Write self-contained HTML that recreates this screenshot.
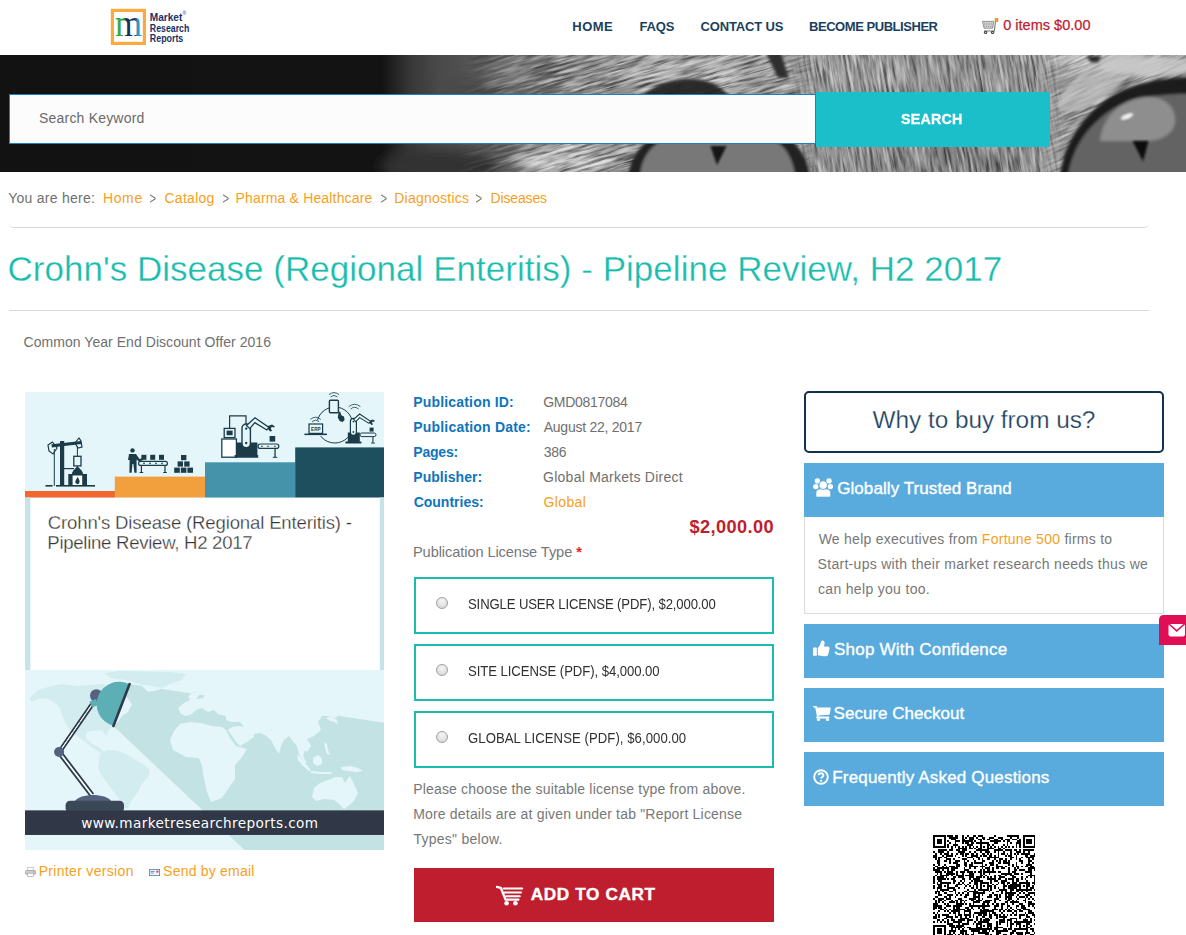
<!DOCTYPE html>
<html lang="en">
<head>
<meta charset="utf-8">
<title>Crohn's Disease (Regional Enteritis) - Pipeline Review, H2 2017</title>
<style>
*{box-sizing:border-box;margin:0;padding:0}
html,body{width:1186px;height:935px;overflow:hidden;background:#fff}
body{font-family:"Liberation Sans",sans-serif;color:#666;font-size:14px;position:relative}
.abs{position:absolute;white-space:nowrap;line-height:1}
.opt{position:absolute;left:414px;width:360px;height:56.5px;border:2px solid #1abcb0;background:#fff}
.opt i{position:absolute;left:20px;top:17.5px;width:12px;height:12px;border-radius:50%;border:1px solid #a0a0a0;background:radial-gradient(circle at 50% 30%,#f6f6f6,#d2d2d2)}
.pan{position:absolute;left:804px;width:360px;background:#5aabdd}
.hr{position:absolute;left:9px;width:1139px;height:1px;background:#dedede}
</style>
</head>
<body>
<svg class="abs" style="left:0;top:55px" width="1186" height="117" viewBox="0 55 1186 117">
<defs>
<linearGradient id="tone" x1="0" x2="1186" y1="0" y2="0" gradientUnits="userSpaceOnUse">
<stop offset="0" stop-color="#121212"/><stop offset="0.322" stop-color="#131313"/><stop offset="0.345" stop-color="#363636"/><stop offset="0.37" stop-color="#4a4a4a"/><stop offset="0.42" stop-color="#5a5a5a"/><stop offset="0.46" stop-color="#787878"/><stop offset="0.50" stop-color="#8c8c8c"/><stop offset="0.60" stop-color="#a0a0a0"/><stop offset="0.75" stop-color="#929292"/><stop offset="0.88" stop-color="#9a9a9a"/><stop offset="1" stop-color="#8c8c8c"/>
</linearGradient>
<filter id="furD" x="0" y="0" width="100%" height="100%" color-interpolation-filters="sRGB">
<feTurbulence type="fractalNoise" baseFrequency="0.035 0.4" numOctaves="3" seed="7" result="n"/>
<feColorMatrix in="n" type="matrix" values="0 0 0 0 0  0 0 0 0 0  0 0 0 0 0  2.6 0 0 0 -1.0"/>
<feGaussianBlur stdDeviation=".5"/>
</filter>
<filter id="furL" x="0" y="0" width="100%" height="100%" color-interpolation-filters="sRGB">
<feTurbulence type="fractalNoise" baseFrequency="0.035 0.4" numOctaves="3" seed="23" result="n"/>
<feColorMatrix in="n" type="matrix" values="0 0 0 0 1  0 0 0 0 1  0 0 0 0 1  2.6 0 0 0 -1.0"/>
<feGaussianBlur stdDeviation=".5"/>
</filter>
<filter id="b6"><feGaussianBlur stdDeviation="6"/></filter>
<filter id="b2"><feGaussianBlur stdDeviation="1.8"/></filter>
<filter id="b1"><feGaussianBlur stdDeviation=".9"/></filter>
<clipPath id="bc"><rect x="0" y="55" width="1186" height="117"/></clipPath>
<linearGradient id="gA" x1="0" x2="1186" y1="0" y2="0" gradientUnits="userSpaceOnUse"><stop offset=".385" stop-color="#fff" stop-opacity="0"/><stop offset=".47" stop-color="#fff" stop-opacity="1"/><stop offset=".665" stop-color="#fff" stop-opacity="1"/><stop offset=".69" stop-color="#fff" stop-opacity="0"/></linearGradient>
<mask id="mA"><rect x="0" y="55" width="1186" height="117" fill="url(#gA)"/></mask>
<linearGradient id="gB" x1="0" x2="1186" y1="0" y2="0" gradientUnits="userSpaceOnUse"><stop offset=".665" stop-color="#fff" stop-opacity="0"/><stop offset=".69" stop-color="#fff" stop-opacity="1"/><stop offset=".875" stop-color="#fff" stop-opacity="1"/><stop offset=".9" stop-color="#fff" stop-opacity="0"/></linearGradient>
<mask id="mB"><rect x="0" y="55" width="1186" height="117" fill="url(#gB)"/></mask>
<linearGradient id="gC" x1="0" x2="1186" y1="0" y2="0" gradientUnits="userSpaceOnUse"><stop offset=".875" stop-color="#fff" stop-opacity="0"/><stop offset=".9" stop-color="#fff" stop-opacity="1"/></linearGradient>
<mask id="mC"><rect x="0" y="55" width="1186" height="117" fill="url(#gC)"/></mask>
</defs>
<g clip-path="url(#bc)">
<rect x="0" y="55" width="1186" height="117" fill="url(#tone)"/>
<g filter="url(#b6)">
<ellipse cx="440" cy="166" rx="60" ry="16" fill="#303030"/>
<ellipse cx="470" cy="90" rx="30" ry="14" fill="#4a4a4a"/>
<ellipse cx="520" cy="75" rx="40" ry="14" fill="#727272"/>
<ellipse cx="565" cy="160" rx="50" ry="14" fill="#cfcfcf"/>
<ellipse cx="700" cy="68" rx="90" ry="12" fill="#b8b8b8"/>
<ellipse cx="880" cy="70" rx="60" ry="16" fill="#a4a4a4"/>
<ellipse cx="950" cy="160" rx="70" ry="14" fill="#808080"/>
<ellipse cx="1120" cy="62" rx="80" ry="14" fill="#c2c2c2"/>
</g>
<g mask="url(#mA)">
<rect x="330" y="-60" width="560" height="340" filter="url(#furD)" transform="rotate(-16 600 110)" opacity=".6"/>
<rect x="330" y="-60" width="560" height="340" filter="url(#furL)" transform="rotate(-16 600 110)" opacity=".55"/>
</g>
<g mask="url(#mB)">
<rect x="760" y="-40" width="320" height="320" filter="url(#furD)" transform="rotate(80 915 113)" opacity=".55"/>
<rect x="760" y="-40" width="320" height="320" filter="url(#furL)" transform="rotate(80 915 113)" opacity=".45"/>
</g>
<g mask="url(#mC)">
<rect x="1000" y="0" width="260" height="230" filter="url(#furD)" transform="rotate(-24 1100 100)" opacity=".45"/>
<rect x="1000" y="0" width="260" height="230" filter="url(#furL)" transform="rotate(-24 1100 100)" opacity=".5"/>
</g>
<!-- left eye -->
<g filter="url(#b2)">
<path d="M628 176 C632 150 650 130 690 126 L760 128 C790 132 806 150 810 176 Z" fill="#232323"/>
<path d="M640 176 C642 150 660 134 695 132 L755 134 C780 138 792 152 795 176 Z" fill="#787878"/>
<path d="M640 98 C654 85 672 79 690 79 C708 79 722 86 731 98 Z" fill="#1c1c1c" opacity=".9"/>
<path d="M766 53 L781 53 L789 78 L778 78 Z" fill="#2e2e2e"/>
</g>
<path d="M710.500 146 L726.500 146 L717 165 Z" fill="#121212" filter="url(#b1)"/>
<!-- right eye -->
<g filter="url(#b2)">
<ellipse cx="1100" cy="80" rx="50" ry="16" fill="#c0c0c0" transform="rotate(-35 1100 80)" opacity=".7"/>
<ellipse cx="1150" cy="66" rx="50" ry="9" fill="#c8c8c8" opacity=".8"/>
<path d="M1060 176 C1064 140 1086 112 1112 96 C1136 83 1160 78 1190 77 L1190 176 Z" fill="#1b1b1b"/>
<path d="M1068 176 C1072 146 1092 120 1118 106 C1140 96 1164 94 1190 94 L1190 176 Z" fill="#636363"/>
<path d="M1100 141 C1102 118 1120 99 1146 97 C1166 96 1176 108 1175 122 C1174 134 1160 141 1146 141 Z" fill="#8e8e8e"/>
<path d="M1087 56 L1102 56 L1098 63 L1090 62 Z" fill="#2c2c2c"/>
</g>
<ellipse cx="1127" cy="116.500" rx="6.500" ry="2.600" fill="#f2f2f2" transform="rotate(-22 1127 116.500)" filter="url(#b1)"/>
<path d="M1132.500 141 L1148.500 141 L1143 161.500 Z" fill="#0e0e0e" filter="url(#b1)"/>
</g>
</svg>

<div class="abs" style="left:9px;top:94px;width:807px;height:50px;background:#fcfcfc;border:1px solid #1c7fc4"></div>
<div class="abs" style="left:816px;top:92px;width:234px;height:55px;background:#1bbfc9"></div>
<div class="abs" style="left:9px;top:219px;width:1140px;height:8.5px;border-bottom:1px solid #d9d9d9;border-radius:0 0 5px 5px"></div>
<div class="hr" style="top:310px;width:1140px;background:#d9d9d9"></div>
<svg class="abs" style="left:25px;top:392px" width="359" height="458" viewBox="25 392 359 458">
<defs>
<clipPath id="beamclip"><path d="M129.6 682.800 L384 721.600 L384 850 L244.500 850 L113.400 726 Z"/></clipPath><path id="beamp" d="M129.6 684 L384 722.8 L384 850 L244.5 850 L113.4 726 Z"/>
<path id="land" d="
M29 698.5 L39 689.5 L52 686 L62 684 L78 686 L92 685 L103 684 L110 688 L118 690 L126 696 L132 704 L128 712 L122 716 L118 722 L112 727 L108 731 L107 736 L104 733 L102 730 L92 731 L86 733 L86 738 L92 744 L100 748 L104 752 L101 753 L93 748 L84 741 L76 735 L69 729 L65 722 L62 715 L60 708 L54 702 L46 698 L38 699 L32 702 Z
M104 673 L120 671 L147 671.5 L170 672 L186 674 L182 680 L170 684 L158 690 L148 692 L140 684 L126 680 L110 678 Z
M100 753 L108 750 L117 750.5 L126 754 L134 759 L143 764 L150 770 L148 777 L141 785 L138 792 L132 800 L128 808 L124 808 L120 800 L114 792 L108 784 L101 775 L98 768 L99 760 Z
M181 714 L178 708 L184 703 L190 700 L188 696 L194 692 L200 694 L196 699 L203 698 L206 692 L212 688 L220 690 L226 685 L238 682 L252 680 L270 678 L290 679 L310 682 L328 686 L345 690 L360 694 L372 698 L376 704 L368 706 L360 710 L352 708 L346 714 L340 712 L336 718 L330 716 L322 716 L318 722 L321 730 L314 736 L307 739 L311 746 L307 752 L305 750 L303 756 L307 763 L304 762 L299 754 L297 746 L292 740 L289 736 L284 740 L281 746 L279 754 L275 748 L271 740 L265 735 L260 733 L254 734 L254 737 L247 742 L240 746 L236 742 L232 736 L228 730 L232 727 L238 726 L244 727 L240 722 L232 722 L226 720 L226 716 L218 714 L214 710 L208 712 L202 708 L196 710 L192 714 L186 716 Z
M180 724 L190 722 L201 723 L212 726 L222 727 L226 730 L230 738 L236 746 L247 749 L242 757 L235 765 L235 779 L228 789 L222 798 L211 802 L207 792 L204 779 L202 766 L199 758 L186 757 L173 750 L170 740 L174 731 Z
M314 788 L320 783 L328 780 L336 777 L342 777 L345 783 L348 778 L350 776 L354 784 L358 793 L354 801 L348 806 L344 809 L338 803 L334 800 L324 799 L316 801 L312 797 Z
M297 754 L301 758 L306 764 L311 770 L309 771 L303 766 L298 760 Z
M311 771 L322 772 L332 772 L331 774 L320 774 L311 773 Z
M313 758 L318 755 L322 758 L322 764 L317 766 L313 763 Z
M341 767 L350 766 L358 768 L363 771 L356 772 L348 771 L342 770 Z
M324 742 L327 744 L328 750 L330 755 L327 754 L325 748 Z
M326 718 L331 716 L337 720 L338 724 L334 722 L330 721 Z
"/>
</defs>
<rect x="25" y="392" width="359" height="458" fill="#fff"/>
<!-- top scene -->
<rect x="25" y="392" width="359" height="106" fill="#e5f6fa"/>
<rect x="25" y="491" width="90" height="6.5" fill="#f2672f"/>
<rect x="114.8" y="476.6" width="90.4" height="20.9" fill="#f2a03d"/>
<rect x="205" y="462.3" width="90.4" height="35.2" fill="#4593ab"/>
<rect x="295.2" y="447.4" width="88.8" height="50.1" fill="#1d4f5e"/>
<g fill="#1b3b49" stroke="none">
<!-- pump jack / forge -->
<rect x="45.5" y="485" width="7" height="1.6"/><rect x="56" y="485" width="39" height="1.6"/>
<rect x="60" y="441" width="4.2" height="45"/>
<path d="M51.5 444.2 L81 441 L81.4 444 L51.8 447.6 Z"/>
<path d="M52.5 442 L48 445 L49 451 L53 454 L57 448 Z" fill="none" stroke="#1b3b49" stroke-width="1.2"/>
<path d="M79 438 L75 443 L78 448 L82 447 L81 441 Z" fill="none" stroke="#1b3b49" stroke-width="1.2"/>
<rect x="53.8" y="449" width="1" height="37"/><rect x="76.9" y="446" width="1" height="10"/>
<rect x="73.8" y="456.3" width="7.2" height="9.6" fill="#e5f6fa" stroke="#1b3b49" stroke-width="1.3"/>
<rect x="64" y="468" width="10" height="1.2"/>
<path d="M73 471 L77.4 466 L82 471 Z"/>
<path d="M68.3 486 L68.3 474 L72 474 C72 468 83 468 83 474 L87 474 L87 486 Z"/>
<rect x="72.6" y="475.5" width="9.6" height="9.5" fill="#fff"/>
<path d="M77.4 477 C79.5 479.5 80 481 79.3 483 C78.6 484.6 76.2 484.6 75.5 483 C74.9 481.3 76 480 77.4 477 Z"/>
<!-- person + conveyor -->
<circle cx="132.5" cy="450.4" r="2.2"/>
<path d="M129 454 L136 454 L139.5 459 L142.5 458 L143 460 L139 461.8 L136.6 459.5 L136.6 472.8 L134.4 472.8 L133.4 464 L132.4 464 L131.6 472.8 L129.4 472.8 L129.6 460 L128 460 Z"/>
<rect x="141.4" y="454.8" width="5" height="5"/><rect x="150.2" y="454.8" width="5" height="5"/><rect x="159" y="454.8" width="5" height="5"/>
<rect x="138.6" y="461.4" width="28.8" height="4" rx="2" fill="#e5f6fa" stroke="#1b3b49" stroke-width="1.2"/>
<circle cx="144" cy="463.4" r=".8"/><circle cx="150" cy="463.4" r=".8"/><circle cx="156" cy="463.4" r=".8"/><circle cx="162" cy="463.4" r=".8"/>
<rect x="140.8" y="466" width="1.2" height="6.6"/><rect x="164.4" y="466" width="1.2" height="6.6"/><rect x="139.6" y="472" width="3.6" height="1"/><rect x="163.2" y="472" width="3.6" height="1"/>
<!-- box pyramid -->
<rect x="181" y="455" width="5.4" height="5.2"/><rect x="177.6" y="461.4" width="5.4" height="5.2"/><rect x="184.2" y="461.4" width="5.4" height="5.2"/>
<rect x="174.2" y="467.6" width="5.6" height="5.2"/><rect x="180.8" y="467.6" width="5.6" height="5.2"/><rect x="187.4" y="467.6" width="5.6" height="5.2"/>
<!-- robot 1 -->
<rect x="221.8" y="439" width="14.6" height="18.2" fill="#fff" stroke="#1b3b49" stroke-width="1.3"/>
<rect x="224.2" y="428.4" width="10.8" height="9.2" fill="#e5f6fa" stroke="#1b3b49" stroke-width="1.3"/><rect x="226.6" y="430.6" width="6" height="4.6"/>
<path d="M229.6 428 L229.6 415.8 L246 415.8 L246 428" fill="none" stroke="#1b3b49" stroke-width="1.2"/>
<path d="M237 442.6 L257.4 442.6 L257.4 455 L258.2 455 L258.2 457.8 L234.6 457.8 L234.6 455 L237 455 Z"/>
<rect x="242" y="424" width="8.4" height="23.6" rx="4.2" fill="#e5f6fa" stroke="#1b3b49" stroke-width="1.4"/>
<circle cx="246.2" cy="428.6" r="1.2"/><circle cx="246.2" cy="443" r="1.2"/>
<path d="M246.5 425.5 L255 417.8 L269 427.4 L266.8 430 L254.8 422.6 L249.8 428.6 Z" fill="#e5f6fa" stroke="#1b3b49" stroke-width="1.3"/>
<path d="M268 426 L272 424.4 L275 426.4 L273.6 427.6 L271.8 426.8 L270.8 428.4 L272 431 L270 431.6 L268 429 Z"/>
<rect x="269.6" y="436" width="5.6" height="5.6"/>
<rect x="258" y="444" width="20.8" height="4.4" rx="2.2" fill="#e5f6fa" stroke="#1b3b49" stroke-width="1.2"/>
<circle cx="262" cy="446.2" r=".8"/><circle cx="268" cy="446.2" r=".8"/><circle cx="275" cy="446.2" r=".8"/>
<rect x="274.4" y="448.6" width="1.3" height="8.6"/><rect x="272.8" y="456.8" width="4.4" height="1"/>
<!-- connected cluster -->
<circle cx="334.8" cy="425" r="18" fill="none" stroke="#1b3b49" stroke-width="1"/>
<rect x="329.4" y="400.2" width="9" height="12.6" rx="1" fill="#e5f6fa" stroke="#1b3b49" stroke-width="1.4"/>
<path d="M330.6 396.8 Q334 394 337.4 396.8 M329 394.6 Q334 390.6 339 394.6" fill="none" stroke="#1b3b49" stroke-width=".8"/>
<path d="M338.6 412 L340 411.6 L341.6 415.6 L344 416.4 L344.6 420 L342.6 422 L339.6 421 L337.8 417.4 Z"/>
<rect x="302" y="420" width="28" height="16" fill="#e5f6fa" stroke="none"/>
<rect x="309" y="424" width="13.6" height="9.4" fill="#e5f6fa" stroke="#1b3b49" stroke-width="1.2"/>
<rect x="304.4" y="433.6" width="22.6" height="1.5"/>
<path d="M312 421.6 Q315.6 418.6 319.2 421.6 M310.4 419.4 Q315.6 415 320.8 419.4" fill="none" stroke="#1b3b49" stroke-width=".8"/>
<path d="M350.6 409 Q354.6 405.6 358.6 409 M348.8 406.6 Q354.6 402 360.4 406.6" fill="none" stroke="#1b3b49" stroke-width=".8"/>
<rect x="346" y="414" width="32" height="30" fill="#e5f6fa" stroke="none" opacity="0"/>
<path d="M347.8 432.4 L359.8 432.4 L359.8 441.4 L361.4 441.4 L361.4 443.4 L345.4 443.4 L345.4 441.4 L347.8 441.4 Z"/>
<rect x="350.4" y="418.4" width="6" height="17" rx="3" fill="#e5f6fa" stroke="#1b3b49" stroke-width="1.2"/>
<circle cx="353.4" cy="421.6" r=".9"/><circle cx="353.4" cy="432" r=".9"/>
<path d="M353.6 419.4 L359.6 414 L370.6 421.4 L369 423.4 L359.6 417.6 L355.8 421.8 Z" fill="#e5f6fa" stroke="#1b3b49" stroke-width="1.1"/>
<path d="M370 420.6 L373 419.6 L375 421 L373.6 422 L372.6 421.6 L372 422.8 L373 424.6 L371.4 425 L369.8 423 Z"/>
<rect x="369.6" y="427.6" width="4" height="4"/>
<rect x="360" y="433" width="16" height="3.6" rx="1.8" fill="#e5f6fa" stroke="#1b3b49" stroke-width="1"/>
<rect x="372.4" y="436.6" width="1.1" height="6.4"/><rect x="371" y="442.6" width="4" height=".9"/>
</g>
<text x="315.8" y="431.4" font-family="Liberation Sans, sans-serif" font-size="4.6" font-weight="bold" fill="#1b3b49" text-anchor="middle">ERP</text>
<!-- white text zone side borders -->
<rect x="25" y="497.5" width="5.4" height="173" fill="#c6e4e7"/>
<rect x="379.8" y="497.5" width="4.2" height="173" fill="#c6e4e7"/>
<!-- bottom scene -->
<rect x="25" y="670" width="359" height="180" fill="#e5f6fa"/>
<clipPath id="lclip"><rect x="25" y="670" width="178" height="180"/></clipPath><g clip-path="url(#lclip)"><use href="#land" fill="#d3ecef"/></g>
<use href="#beamp" fill="#c3e2e3"/>
<g clip-path="url(#beamclip)"><use href="#land" fill="#e5f6fa"/></g>
<rect x="25" y="810.6" width="359" height="24.2" fill="#303746"/>
<!-- lamp -->
<g>
<path d="M91 703.5 L58 751.5 M60.4 753 L93.4 705" stroke="#2f3a4a" stroke-width="1.8" fill="none"/>
<path d="M92.2 704.2 L59.2 752.2" stroke="#fff" stroke-width="1.0" fill="none" stroke-dasharray="9 2.5"/>
<path d="M57.6 753 L90.4 796 M60.6 751 L93.4 794" stroke="#2f3a4a" stroke-width="1.8" fill="none"/>
<path d="M59.1 752 L92 795" stroke="#fff" stroke-width="1.0" fill="none" stroke-dasharray="9 2.5"/>
<circle cx="59.1" cy="752" r="5" fill="#546280"/>
<circle cx="96.4" cy="695.6" r="6.4" fill="#546280"/>
<path d="M89.5 701.5 L96 699 L98 705 L92 707.5 Z" fill="#5cb0b5"/>
<path d="M129.4 684.3 A22.4 22.4 0 1 0 113.3 725.8 Z" fill="#5cb0b5"/>
<path d="M129.6 684 L113.4 726" stroke="#2f3a4a" stroke-width="2.6" stroke-linecap="round"/>
<path d="M74.8 801.4 C80 793 106 793 111.4 801.4 Z" fill="#546280"/>
<rect x="65.6" y="800.8" width="58.4" height="12" rx="4.5" fill="#3b4858"/>
</g>
<rect x="25" y="810.6" width="359" height="24.2" fill="#303746"/>
</svg>

<div class="opt" style="top:577px"><i></i></div>
<div class="opt" style="top:644px"><i></i></div>
<div class="opt" style="top:711px"><i></i></div>
<div class="abs" style="left:414px;top:867.6px;width:360px;height:54.8px;background:#be1e2d"></div>
<div class="abs" style="left:804px;top:391px;width:360px;height:61.5px;border:2px solid #12304f;border-radius:5px;background:#fff"></div>
<div class="pan" style="top:463px;height:54px"></div>
<div class="abs" style="left:804px;top:517px;width:360px;height:96.5px;border:1px solid #ddd;border-top:0;background:#fff"></div>
<div class="pan" style="top:624.4px;height:53.2px"></div>
<div class="pan" style="top:688.4px;height:53.2px"></div>
<div class="pan" style="top:752.4px;height:53.2px"></div>
<svg class="abs" style="left:932.7px;top:835px" width="102.4" height="102.4" viewBox="0 0 57 57" shape-rendering="crispEdges"><path d="M0 0h7v1h-7zM8 0h3v1h-3zM12 0h2v1h-2zM16 0h1v1h-1zM19 0h1v1h-1zM22 0h2v1h-2zM25 0h3v1h-3zM34 0h1v1h-1zM41 0h7v1h-7zM50 0h7v1h-7zM0 1h1v1h-1zM6 1h1v1h-1zM9 1h5v1h-5zM16 1h1v1h-1zM18 1h1v1h-1zM20 1h3v1h-3zM24 1h1v1h-1zM27 1h2v1h-2zM31 1h3v1h-3zM36 1h3v1h-3zM43 1h1v1h-1zM47 1h1v1h-1zM50 1h1v1h-1zM56 1h1v1h-1zM0 2h1v1h-1zM2 2h3v1h-3zM6 2h1v1h-1zM10 2h3v1h-3zM16 2h2v1h-2zM20 2h3v1h-3zM25 2h2v1h-2zM28 2h1v1h-1zM30 2h2v1h-2zM34 2h2v1h-2zM38 2h1v1h-1zM40 2h3v1h-3zM44 2h3v1h-3zM48 2h1v1h-1zM50 2h1v1h-1zM52 2h3v1h-3zM56 2h1v1h-1zM0 3h1v1h-1zM2 3h3v1h-3zM6 3h1v1h-1zM8 3h1v1h-1zM12 3h3v1h-3zM16 3h6v1h-6zM23 3h1v1h-1zM26 3h1v1h-1zM32 3h6v1h-6zM39 3h1v1h-1zM41 3h2v1h-2zM47 3h2v1h-2zM50 3h1v1h-1zM52 3h3v1h-3zM56 3h1v1h-1zM0 4h1v1h-1zM2 4h3v1h-3zM6 4h1v1h-1zM9 4h1v1h-1zM12 4h1v1h-1zM16 4h1v1h-1zM18 4h2v1h-2zM21 4h2v1h-2zM24 4h7v1h-7zM34 4h2v1h-2zM41 4h1v1h-1zM43 4h1v1h-1zM46 4h3v1h-3zM50 4h1v1h-1zM52 4h3v1h-3zM56 4h1v1h-1zM0 5h1v1h-1zM6 5h1v1h-1zM8 5h1v1h-1zM11 5h3v1h-3zM19 5h3v1h-3zM26 5h1v1h-1zM30 5h2v1h-2zM33 5h1v1h-1zM39 5h1v1h-1zM41 5h1v1h-1zM46 5h1v1h-1zM48 5h1v1h-1zM50 5h1v1h-1zM56 5h1v1h-1zM0 6h7v1h-7zM8 6h1v1h-1zM10 6h1v1h-1zM12 6h1v1h-1zM14 6h1v1h-1zM16 6h1v1h-1zM18 6h1v1h-1zM20 6h1v1h-1zM22 6h1v1h-1zM24 6h1v1h-1zM26 6h1v1h-1zM28 6h1v1h-1zM30 6h1v1h-1zM32 6h1v1h-1zM34 6h1v1h-1zM36 6h1v1h-1zM38 6h1v1h-1zM40 6h1v1h-1zM42 6h1v1h-1zM44 6h1v1h-1zM46 6h1v1h-1zM48 6h1v1h-1zM50 6h7v1h-7zM10 7h1v1h-1zM14 7h5v1h-5zM20 7h2v1h-2zM23 7h1v1h-1zM25 7h2v1h-2zM30 7h4v1h-4zM36 7h2v1h-2zM39 7h1v1h-1zM3 8h5v1h-5zM9 8h2v1h-2zM13 8h2v1h-2zM16 8h3v1h-3zM24 8h7v1h-7zM34 8h5v1h-5zM40 8h4v1h-4zM45 8h2v1h-2zM48 8h1v1h-1zM50 8h6v1h-6zM0 9h1v1h-1zM3 9h3v1h-3zM8 9h1v1h-1zM14 9h4v1h-4zM20 9h1v1h-1zM23 9h1v1h-1zM26 9h1v1h-1zM29 9h3v1h-3zM34 9h1v1h-1zM36 9h1v1h-1zM39 9h1v1h-1zM43 9h1v1h-1zM46 9h3v1h-3zM50 9h1v1h-1zM53 9h1v1h-1zM1 10h1v1h-1zM4 10h1v1h-1zM6 10h3v1h-3zM10 10h1v1h-1zM13 10h1v1h-1zM15 10h2v1h-2zM18 10h2v1h-2zM21 10h2v1h-2zM24 10h1v1h-1zM27 10h2v1h-2zM30 10h1v1h-1zM32 10h1v1h-1zM36 10h1v1h-1zM38 10h2v1h-2zM41 10h1v1h-1zM43 10h1v1h-1zM45 10h1v1h-1zM47 10h1v1h-1zM49 10h5v1h-5zM56 10h1v1h-1zM0 11h2v1h-2zM5 11h1v1h-1zM7 11h4v1h-4zM12 11h1v1h-1zM16 11h1v1h-1zM18 11h1v1h-1zM21 11h4v1h-4zM26 11h1v1h-1zM28 11h2v1h-2zM31 11h2v1h-2zM34 11h1v1h-1zM36 11h1v1h-1zM40 11h1v1h-1zM42 11h2v1h-2zM46 11h1v1h-1zM51 11h2v1h-2zM54 11h3v1h-3zM0 12h2v1h-2zM3 12h2v1h-2zM6 12h2v1h-2zM14 12h1v1h-1zM19 12h3v1h-3zM24 12h2v1h-2zM30 12h7v1h-7zM43 12h2v1h-2zM46 12h1v1h-1zM49 12h1v1h-1zM52 12h4v1h-4zM1 13h1v1h-1zM3 13h1v1h-1zM7 13h3v1h-3zM11 13h1v1h-1zM16 13h3v1h-3zM22 13h1v1h-1zM25 13h1v1h-1zM27 13h1v1h-1zM30 13h2v1h-2zM34 13h1v1h-1zM37 13h2v1h-2zM40 13h1v1h-1zM43 13h1v1h-1zM46 13h1v1h-1zM48 13h1v1h-1zM53 13h1v1h-1zM55 13h1v1h-1zM2 14h2v1h-2zM6 14h2v1h-2zM9 14h1v1h-1zM12 14h3v1h-3zM17 14h1v1h-1zM19 14h1v1h-1zM23 14h1v1h-1zM27 14h2v1h-2zM33 14h1v1h-1zM35 14h1v1h-1zM37 14h1v1h-1zM39 14h2v1h-2zM42 14h1v1h-1zM48 14h2v1h-2zM53 14h2v1h-2zM2 15h2v1h-2zM9 15h1v1h-1zM11 15h3v1h-3zM17 15h2v1h-2zM21 15h1v1h-1zM23 15h5v1h-5zM31 15h3v1h-3zM36 15h2v1h-2zM39 15h4v1h-4zM46 15h1v1h-1zM49 15h1v1h-1zM53 15h1v1h-1zM55 15h1v1h-1zM0 16h1v1h-1zM3 16h1v1h-1zM6 16h1v1h-1zM13 16h2v1h-2zM17 16h2v1h-2zM20 16h2v1h-2zM27 16h1v1h-1zM29 16h1v1h-1zM32 16h2v1h-2zM35 16h1v1h-1zM42 16h1v1h-1zM44 16h1v1h-1zM46 16h1v1h-1zM52 16h3v1h-3zM1 17h2v1h-2zM5 17h1v1h-1zM7 17h1v1h-1zM9 17h3v1h-3zM13 17h2v1h-2zM18 17h1v1h-1zM20 17h5v1h-5zM26 17h3v1h-3zM31 17h1v1h-1zM35 17h4v1h-4zM40 17h1v1h-1zM44 17h1v1h-1zM46 17h2v1h-2zM49 17h1v1h-1zM51 17h2v1h-2zM54 17h2v1h-2zM0 18h1v1h-1zM2 18h7v1h-7zM10 18h4v1h-4zM17 18h1v1h-1zM20 18h1v1h-1zM23 18h1v1h-1zM27 18h1v1h-1zM29 18h3v1h-3zM33 18h1v1h-1zM35 18h2v1h-2zM38 18h2v1h-2zM42 18h1v1h-1zM45 18h1v1h-1zM47 18h1v1h-1zM53 18h4v1h-4zM0 19h4v1h-4zM5 19h1v1h-1zM8 19h1v1h-1zM10 19h2v1h-2zM17 19h3v1h-3zM26 19h1v1h-1zM28 19h1v1h-1zM30 19h2v1h-2zM33 19h1v1h-1zM42 19h1v1h-1zM45 19h2v1h-2zM48 19h3v1h-3zM53 19h2v1h-2zM56 19h1v1h-1zM1 20h4v1h-4zM6 20h1v1h-1zM8 20h3v1h-3zM13 20h1v1h-1zM15 20h3v1h-3zM19 20h3v1h-3zM23 20h1v1h-1zM25 20h2v1h-2zM28 20h7v1h-7zM36 20h2v1h-2zM42 20h1v1h-1zM44 20h2v1h-2zM51 20h4v1h-4zM2 21h1v1h-1zM4 21h1v1h-1zM7 21h5v1h-5zM13 21h1v1h-1zM16 21h1v1h-1zM20 21h3v1h-3zM26 21h1v1h-1zM28 21h1v1h-1zM31 21h1v1h-1zM38 21h6v1h-6zM45 21h3v1h-3zM49 21h1v1h-1zM54 21h1v1h-1zM1 22h1v1h-1zM4 22h5v1h-5zM10 22h1v1h-1zM13 22h4v1h-4zM18 22h5v1h-5zM26 22h2v1h-2zM29 22h1v1h-1zM34 22h1v1h-1zM36 22h2v1h-2zM40 22h1v1h-1zM43 22h2v1h-2zM53 22h4v1h-4zM0 23h1v1h-1zM2 23h4v1h-4zM7 23h1v1h-1zM11 23h2v1h-2zM14 23h3v1h-3zM20 23h3v1h-3zM24 23h3v1h-3zM28 23h1v1h-1zM30 23h1v1h-1zM32 23h1v1h-1zM34 23h1v1h-1zM37 23h3v1h-3zM44 23h2v1h-2zM49 23h1v1h-1zM52 23h1v1h-1zM54 23h1v1h-1zM56 23h1v1h-1zM0 24h1v1h-1zM2 24h5v1h-5zM8 24h1v1h-1zM10 24h2v1h-2zM16 24h2v1h-2zM20 24h1v1h-1zM22 24h4v1h-4zM30 24h5v1h-5zM36 24h2v1h-2zM40 24h1v1h-1zM42 24h3v1h-3zM46 24h2v1h-2zM49 24h1v1h-1zM51 24h1v1h-1zM56 24h1v1h-1zM0 25h1v1h-1zM3 25h2v1h-2zM11 25h2v1h-2zM15 25h1v1h-1zM17 25h1v1h-1zM21 25h1v1h-1zM23 25h5v1h-5zM32 25h1v1h-1zM34 25h2v1h-2zM38 25h3v1h-3zM44 25h1v1h-1zM46 25h2v1h-2zM52 25h1v1h-1zM56 25h1v1h-1zM0 26h1v1h-1zM2 26h1v1h-1zM4 26h6v1h-6zM11 26h1v1h-1zM14 26h1v1h-1zM16 26h1v1h-1zM20 26h1v1h-1zM23 26h2v1h-2zM26 26h5v1h-5zM32 26h1v1h-1zM36 26h1v1h-1zM38 26h2v1h-2zM41 26h2v1h-2zM44 26h3v1h-3zM48 26h6v1h-6zM55 26h2v1h-2zM2 27h3v1h-3zM8 27h1v1h-1zM13 27h3v1h-3zM17 27h1v1h-1zM19 27h1v1h-1zM23 27h2v1h-2zM26 27h1v1h-1zM30 27h1v1h-1zM33 27h1v1h-1zM35 27h1v1h-1zM39 27h1v1h-1zM41 27h1v1h-1zM43 27h6v1h-6zM52 27h2v1h-2zM56 27h1v1h-1zM0 28h1v1h-1zM3 28h2v1h-2zM6 28h1v1h-1zM8 28h1v1h-1zM12 28h2v1h-2zM18 28h1v1h-1zM20 28h1v1h-1zM22 28h1v1h-1zM24 28h1v1h-1zM26 28h1v1h-1zM28 28h1v1h-1zM30 28h3v1h-3zM34 28h1v1h-1zM39 28h2v1h-2zM42 28h7v1h-7zM50 28h1v1h-1zM52 28h2v1h-2zM55 28h1v1h-1zM0 29h1v1h-1zM2 29h3v1h-3zM8 29h4v1h-4zM14 29h1v1h-1zM17 29h1v1h-1zM21 29h2v1h-2zM24 29h1v1h-1zM26 29h1v1h-1zM30 29h1v1h-1zM32 29h1v1h-1zM34 29h1v1h-1zM36 29h1v1h-1zM39 29h1v1h-1zM42 29h5v1h-5zM48 29h1v1h-1zM52 29h1v1h-1zM54 29h2v1h-2zM2 30h1v1h-1zM4 30h5v1h-5zM11 30h2v1h-2zM19 30h1v1h-1zM23 30h1v1h-1zM25 30h6v1h-6zM32 30h1v1h-1zM37 30h4v1h-4zM43 30h2v1h-2zM46 30h9v1h-9zM56 30h1v1h-1zM1 31h3v1h-3zM5 31h1v1h-1zM9 31h2v1h-2zM12 31h1v1h-1zM17 31h2v1h-2zM20 31h5v1h-5zM28 31h1v1h-1zM31 31h1v1h-1zM35 31h2v1h-2zM38 31h1v1h-1zM40 31h1v1h-1zM43 31h1v1h-1zM46 31h2v1h-2zM49 31h1v1h-1zM52 31h1v1h-1zM1 32h1v1h-1zM3 32h1v1h-1zM6 32h2v1h-2zM12 32h1v1h-1zM14 32h1v1h-1zM16 32h1v1h-1zM19 32h1v1h-1zM22 32h7v1h-7zM33 32h1v1h-1zM38 32h1v1h-1zM40 32h6v1h-6zM48 32h1v1h-1zM50 32h1v1h-1zM53 32h4v1h-4zM3 33h2v1h-2zM8 33h3v1h-3zM13 33h1v1h-1zM15 33h1v1h-1zM18 33h2v1h-2zM22 33h2v1h-2zM25 33h1v1h-1zM27 33h1v1h-1zM31 33h2v1h-2zM34 33h2v1h-2zM37 33h1v1h-1zM40 33h1v1h-1zM42 33h3v1h-3zM47 33h1v1h-1zM51 33h3v1h-3zM56 33h1v1h-1zM1 34h2v1h-2zM6 34h2v1h-2zM9 34h1v1h-1zM12 34h1v1h-1zM17 34h2v1h-2zM22 34h4v1h-4zM30 34h3v1h-3zM35 34h1v1h-1zM37 34h1v1h-1zM40 34h4v1h-4zM46 34h1v1h-1zM48 34h3v1h-3zM52 34h1v1h-1zM54 34h1v1h-1zM0 35h1v1h-1zM3 35h3v1h-3zM7 35h3v1h-3zM14 35h2v1h-2zM20 35h4v1h-4zM25 35h1v1h-1zM27 35h1v1h-1zM34 35h3v1h-3zM40 35h1v1h-1zM42 35h2v1h-2zM47 35h1v1h-1zM51 35h1v1h-1zM53 35h1v1h-1zM55 35h1v1h-1zM1 36h1v1h-1zM3 36h2v1h-2zM6 36h1v1h-1zM10 36h1v1h-1zM12 36h2v1h-2zM15 36h2v1h-2zM18 36h1v1h-1zM21 36h2v1h-2zM24 36h3v1h-3zM29 36h4v1h-4zM34 36h1v1h-1zM37 36h1v1h-1zM41 36h2v1h-2zM44 36h1v1h-1zM46 36h1v1h-1zM50 36h2v1h-2zM56 36h1v1h-1zM1 37h1v1h-1zM3 37h1v1h-1zM5 37h1v1h-1zM9 37h3v1h-3zM13 37h1v1h-1zM15 37h1v1h-1zM17 37h1v1h-1zM22 37h4v1h-4zM28 37h4v1h-4zM34 37h1v1h-1zM40 37h2v1h-2zM43 37h5v1h-5zM51 37h1v1h-1zM53 37h2v1h-2zM0 38h3v1h-3zM6 38h1v1h-1zM8 38h1v1h-1zM13 38h4v1h-4zM18 38h1v1h-1zM20 38h1v1h-1zM22 38h1v1h-1zM27 38h2v1h-2zM30 38h1v1h-1zM33 38h1v1h-1zM35 38h2v1h-2zM38 38h2v1h-2zM41 38h1v1h-1zM44 38h1v1h-1zM48 38h2v1h-2zM53 38h4v1h-4zM0 39h5v1h-5zM7 39h3v1h-3zM11 39h5v1h-5zM20 39h12v1h-12zM34 39h3v1h-3zM38 39h1v1h-1zM41 39h2v1h-2zM46 39h2v1h-2zM49 39h2v1h-2zM53 39h1v1h-1zM55 39h1v1h-1zM0 40h2v1h-2zM3 40h2v1h-2zM6 40h1v1h-1zM11 40h1v1h-1zM13 40h2v1h-2zM18 40h2v1h-2zM21 40h1v1h-1zM25 40h1v1h-1zM27 40h2v1h-2zM34 40h1v1h-1zM38 40h1v1h-1zM41 40h1v1h-1zM43 40h1v1h-1zM46 40h1v1h-1zM49 40h3v1h-3zM56 40h1v1h-1zM0 41h1v1h-1zM4 41h2v1h-2zM7 41h1v1h-1zM9 41h1v1h-1zM11 41h7v1h-7zM19 41h2v1h-2zM22 41h1v1h-1zM26 41h1v1h-1zM28 41h3v1h-3zM33 41h3v1h-3zM37 41h2v1h-2zM40 41h1v1h-1zM42 41h1v1h-1zM44 41h1v1h-1zM47 41h2v1h-2zM50 41h4v1h-4zM3 42h1v1h-1zM6 42h1v1h-1zM8 42h1v1h-1zM10 42h5v1h-5zM17 42h4v1h-4zM26 42h8v1h-8zM37 42h1v1h-1zM39 42h1v1h-1zM41 42h3v1h-3zM45 42h2v1h-2zM48 42h2v1h-2zM53 42h2v1h-2zM0 43h1v1h-1zM2 43h1v1h-1zM9 43h1v1h-1zM11 43h2v1h-2zM14 43h1v1h-1zM17 43h1v1h-1zM20 43h1v1h-1zM23 43h7v1h-7zM31 43h1v1h-1zM33 43h2v1h-2zM38 43h1v1h-1zM44 43h1v1h-1zM46 43h1v1h-1zM51 43h1v1h-1zM53 43h3v1h-3zM1 44h1v1h-1zM3 44h1v1h-1zM5 44h4v1h-4zM12 44h1v1h-1zM14 44h2v1h-2zM17 44h4v1h-4zM22 44h1v1h-1zM25 44h2v1h-2zM28 44h2v1h-2zM31 44h2v1h-2zM34 44h2v1h-2zM37 44h1v1h-1zM39 44h1v1h-1zM41 44h1v1h-1zM43 44h1v1h-1zM45 44h2v1h-2zM48 44h3v1h-3zM52 44h1v1h-1zM55 44h2v1h-2zM0 45h2v1h-2zM3 45h1v1h-1zM7 45h4v1h-4zM12 45h2v1h-2zM15 45h1v1h-1zM18 45h1v1h-1zM20 45h1v1h-1zM22 45h1v1h-1zM24 45h1v1h-1zM27 45h2v1h-2zM31 45h2v1h-2zM35 45h1v1h-1zM37 45h4v1h-4zM48 45h1v1h-1zM52 45h2v1h-2zM56 45h1v1h-1zM0 46h2v1h-2zM6 46h2v1h-2zM10 46h1v1h-1zM15 46h5v1h-5zM24 46h1v1h-1zM26 46h1v1h-1zM29 46h2v1h-2zM32 46h1v1h-1zM35 46h1v1h-1zM39 46h1v1h-1zM43 46h4v1h-4zM48 46h1v1h-1zM51 46h1v1h-1zM54 46h1v1h-1zM2 47h2v1h-2zM5 47h1v1h-1zM8 47h1v1h-1zM10 47h2v1h-2zM14 47h4v1h-4zM19 47h3v1h-3zM24 47h1v1h-1zM26 47h1v1h-1zM28 47h4v1h-4zM37 47h3v1h-3zM41 47h3v1h-3zM46 47h1v1h-1zM50 47h3v1h-3zM54 47h1v1h-1zM56 47h1v1h-1zM0 48h1v1h-1zM2 48h1v1h-1zM4 48h1v1h-1zM6 48h1v1h-1zM8 48h1v1h-1zM11 48h5v1h-5zM19 48h1v1h-1zM23 48h1v1h-1zM25 48h6v1h-6zM35 48h1v1h-1zM37 48h3v1h-3zM41 48h1v1h-1zM43 48h1v1h-1zM45 48h10v1h-10zM8 49h3v1h-3zM14 49h1v1h-1zM16 49h4v1h-4zM22 49h1v1h-1zM24 49h3v1h-3zM30 49h3v1h-3zM35 49h1v1h-1zM37 49h1v1h-1zM41 49h1v1h-1zM43 49h2v1h-2zM46 49h3v1h-3zM52 49h2v1h-2zM56 49h1v1h-1zM0 50h7v1h-7zM9 50h3v1h-3zM13 50h4v1h-4zM24 50h1v1h-1zM26 50h1v1h-1zM28 50h1v1h-1zM30 50h3v1h-3zM35 50h1v1h-1zM41 50h1v1h-1zM43 50h1v1h-1zM46 50h1v1h-1zM48 50h1v1h-1zM50 50h1v1h-1zM52 50h1v1h-1zM54 50h1v1h-1zM0 51h1v1h-1zM6 51h1v1h-1zM10 51h6v1h-6zM17 51h1v1h-1zM19 51h2v1h-2zM24 51h3v1h-3zM30 51h1v1h-1zM32 51h1v1h-1zM34 51h5v1h-5zM43 51h1v1h-1zM48 51h1v1h-1zM52 51h2v1h-2zM0 52h1v1h-1zM2 52h3v1h-3zM6 52h1v1h-1zM10 52h1v1h-1zM12 52h1v1h-1zM14 52h1v1h-1zM16 52h1v1h-1zM20 52h13v1h-13zM34 52h2v1h-2zM39 52h2v1h-2zM42 52h2v1h-2zM45 52h8v1h-8zM54 52h2v1h-2zM0 53h1v1h-1zM2 53h3v1h-3zM6 53h1v1h-1zM9 53h4v1h-4zM15 53h4v1h-4zM21 53h5v1h-5zM27 53h3v1h-3zM31 53h1v1h-1zM33 53h1v1h-1zM35 53h7v1h-7zM44 53h2v1h-2zM52 53h1v1h-1zM55 53h1v1h-1zM0 54h1v1h-1zM2 54h3v1h-3zM6 54h1v1h-1zM9 54h1v1h-1zM11 54h1v1h-1zM15 54h2v1h-2zM18 54h1v1h-1zM22 54h1v1h-1zM25 54h6v1h-6zM35 54h3v1h-3zM43 54h2v1h-2zM46 54h4v1h-4zM51 54h3v1h-3zM56 54h1v1h-1zM0 55h1v1h-1zM6 55h1v1h-1zM8 55h3v1h-3zM12 55h1v1h-1zM14 55h1v1h-1zM16 55h1v1h-1zM18 55h2v1h-2zM21 55h2v1h-2zM29 55h2v1h-2zM32 55h1v1h-1zM35 55h2v1h-2zM39 55h2v1h-2zM43 55h1v1h-1zM47 55h3v1h-3zM51 55h1v1h-1zM54 55h2v1h-2zM0 56h7v1h-7zM10 56h3v1h-3zM15 56h1v1h-1zM19 56h2v1h-2zM22 56h1v1h-1zM25 56h5v1h-5zM32 56h2v1h-2zM37 56h1v1h-1zM40 56h3v1h-3zM46 56h1v1h-1zM49 56h2v1h-2z" fill="#000"/></svg>
<!-- logo -->
<svg class="abs" style="left:110px;top:8px" width="82" height="38" viewBox="110 8 82 38">
<defs><linearGradient id="mg" x1="115" x2="142" y1="0" y2="0" gradientUnits="userSpaceOnUse"><stop offset="0" stop-color="#3aa845"/><stop offset=".3" stop-color="#3aa845"/><stop offset=".42" stop-color="#16305c"/><stop offset=".72" stop-color="#16305c"/><stop offset=".84" stop-color="#1e9fd0"/><stop offset="1" stop-color="#1e9fd0"/></linearGradient></defs>
<rect x="112.4" y="10.4" width="32" height="33" fill="#fff" stroke="#fbab3d" stroke-width="3.2"/>
<text x="128.4" y="35.6" text-anchor="middle" font-family="Liberation Serif, serif" font-size="37.5" fill="url(#mg)" textLength="27" lengthAdjust="spacingAndGlyphs">m</text>
<g font-family="Liberation Sans, sans-serif" font-weight="bold" font-size="11.2" fill="#1a2f63">
<text x="149.8" y="21.4" textLength="32.5" lengthAdjust="spacingAndGlyphs">Market</text>
<text x="149.8" y="32" textLength="39.5" lengthAdjust="spacingAndGlyphs">Research</text>
<text x="149.8" y="42" textLength="33.5" lengthAdjust="spacingAndGlyphs">Reports</text>
</g>
<text x="182.6" y="15.4" font-family="Liberation Sans, sans-serif" font-size="5" fill="#1a2f63">®</text>
</svg>
<!-- header cart -->
<svg class="abs" style="left:981px;top:18px" width="19" height="17" viewBox="0 0 19 17">
<path d="M1.4 3.4 L12.6 3.4 L11.8 10.2 L3 10.2 Z" fill="#d9d9d9" stroke="#8a8a8a" stroke-width=".9"/>
<path d="M3 5.2h8.6M3.2 6.8h8.2M3.4 8.4h8" stroke="#7a7a7a" stroke-width=".7" stroke-dasharray="1 .8"/>
<path d="M14.6 2.2 L13.4 13 L3 13" fill="none" stroke="#777" stroke-width="1.1"/>
<circle cx="4.6" cy="14.4" r="1.7" fill="#444"/><circle cx="11.6" cy="14.4" r="1.7" fill="#444"/>
<circle cx="4.6" cy="14.4" r=".7" fill="#ccc"/><circle cx="11.6" cy="14.4" r=".7" fill="#ccc"/>
<rect x="14" y=".6" width="3" height="3" fill="#f6a21c" stroke="#c9790a" stroke-width=".5"/>
</svg>
<!-- users icon -->
<svg class="abs" style="left:813px;top:478px" width="20" height="19" viewBox="0 0 20 19" fill="#fff">
<circle cx="4.400" cy="2.900" r="2.700"/><circle cx="16" cy="2.900" r="2.700"/><circle cx="2.800" cy="8.600" r="2.700"/><circle cx="17.400" cy="8.600" r="2.700"/>
<path d="M3 15 C3 11.600 6 10.800 10.200 10.800 C14.400 10.800 17.600 11.600 17.600 15 L17.600 17.400 C17.600 18.400 17 19 16 19 L4.600 19 C3.600 19 3 18.400 3 17.400Z" stroke="#5aabdd" stroke-width=".6"/>
<circle cx="10.200" cy="7.100" r="4.300" stroke="#5aabdd" stroke-width="1"/>
</svg>
<!-- thumbs up -->
<svg class="abs" style="left:813px;top:640px" width="17" height="17" viewBox="0 0 17 17" fill="#fff">
<rect x="0" y="7.4" width="3.8" height="8.4" rx=".6"/>
<path d="M4.8 8 C6.4 6.6 7.4 4.6 7.8 2.6 C8 1.2 8.6 .4 9.6 .4 C11 .4 11.6 1.8 11.6 3.2 C11.6 4.6 11 5.6 10.8 6.6 L14.6 6.6 C15.8 6.6 16.6 7.4 16.6 8.4 C16.6 9 16.4 9.4 16 9.8 C16.4 10.4 16.4 11.2 15.8 11.8 C16 12.6 15.8 13.2 15.2 13.8 C15.4 15.2 14.4 16.2 13 16.2 L10.4 16.2 C8.4 16.2 6.8 15.4 4.8 15.2 Z"/>
</svg>
<!-- cart2 -->
<svg class="abs" style="left:813px;top:706px" width="18" height="15" viewBox="0 0 18 15" fill="#fff">
<path d="M0 .8 C0 .3 .3 0 .8 0 L3.200 0 C3.800 0 4 .5 4.100 1.400 L17 1.400 C17.600 1.400 17.800 1.800 17.700 2.300 L16.800 7.800 C16.700 8.400 16.400 8.600 15.900 8.700 L5.600 9.600 C5.700 10 5.700 10.200 5.500 10.600 L15.600 10.600 C16.700 10.600 16.700 12.400 15.600 12.400 L4 12.400 C3.200 12.400 3 11.700 3.300 11.200 L3.900 10 L2.200 1.600 L.8 1.600 C.3 1.600 0 1.300 0 .8Z"/>
<circle cx="5.500" cy="13.500" r="1.600"/><circle cx="14.500" cy="13.500" r="1.600"/>
</svg>
<!-- question circle -->
<svg class="abs" style="left:813px;top:768.700px" width="16" height="16" viewBox="0 0 16 16">
<circle cx="8" cy="8" r="6.800" fill="none" stroke="#fff" stroke-width="1.900"/>
<path d="M5.600 6.300 C5.600 3.500 10.400 3.500 10.400 6.300 C10.400 7.900 8.100 8 8.100 9.600" fill="none" stroke="#fff" stroke-width="1.900"/>
<circle cx="8.100" cy="11.800" r="1.150" fill="#fff"/>
</svg>
<!-- add to cart icon -->
<svg class="abs" style="left:496px;top:885px" width="28" height="22" viewBox="0 0 28 22" fill="none" stroke="#fff">
<path d="M.8 1.800 L4.800 2.800 L9.600 14.700 L22.400 14.700" stroke-width="2.300" stroke-linejoin="round" stroke-linecap="round"/>
<path d="M7.600 3.500 L26.200 3.500 M8.800 7.600 L25 7.600 M10.200 11.300 L23.800 11.300" stroke-width="2" stroke-linecap="round"/>
<circle cx="10.600" cy="18.300" r="2.300" fill="#fff" stroke="none"/><circle cx="19.400" cy="18.300" r="2.300" fill="#fff" stroke="none"/>
</svg>
<!-- mail tab -->
<svg class="abs" style="left:1159px;top:614.800px" width="27" height="30" viewBox="0 0 27 30">
<path d="M4.500 0 L27 0 L27 30 L0 30 L0 4.500 C0 2 2 0 4.500 0Z" fill="#e00e55"/>
<rect x="9.500" y="9.100" width="16.500" height="12.300" rx="1.800" fill="#fff"/>
<path d="M10.300 9.300 L17.700 15.900 L25.200 9.300" fill="none" stroke="#e00e55" stroke-width="1.500"/>
</svg>
<!-- printer -->
<svg class="abs" style="left:25px;top:867px" width="11" height="10" viewBox="0 0 11 10">
<rect x="2.800" y=".4" width="5.400" height="3.200" fill="#fff" stroke="#aaa" stroke-width=".6"/>
<rect x=".5" y="3.500" width="10" height="3.800" rx=".9" fill="#cfcfcf" stroke="#8e8e8e" stroke-width=".6"/>
<rect x="2.600" y="6.200" width="5.800" height="3.300" fill="#fff" stroke="#9a9a9a" stroke-width=".6"/>
<rect x="8.300" y="4.400" width="1.200" height=".9" fill="#e8743c"/>
</svg>
<!-- email -->
<svg class="abs" style="left:149px;top:868.500px" width="11" height="7" viewBox="0 0 11 7">
<rect x=".4" y=".4" width="10.200" height="6.200" fill="#eef3fb" stroke="#5b7fb5" stroke-width=".8"/>
<rect x="1.600" y="2" width="4" height=".8" fill="#5b7fb5"/><rect x="1.600" y="3.600" width="3" height=".8" fill="#5b7fb5"/>
<rect x="7.400" y="1.600" width="2" height="2" fill="#d8423a"/>
</svg>

<div id="nav1" class="abs" style="left:572.35px;top:19.90px;font-size:13px;letter-spacing:0.461px;font-weight:bold;color:#1b3f5e">HOME</div>
<div id="nav2" class="abs" style="left:639.62px;top:19.90px;font-size:13px;letter-spacing:-0.235px;font-weight:bold;color:#1b3f5e">FAQS</div>
<div id="nav3" class="abs" style="left:700.61px;top:19.90px;font-size:13px;letter-spacing:-0.169px;font-weight:bold;color:#1b3f5e">CONTACT US</div>
<div id="nav4" class="abs" style="left:809.04px;top:19.90px;font-size:13px;letter-spacing:-0.456px;font-weight:bold;color:#1b3f5e">BECOME PUBLISHER</div>
<div id="cart" class="abs" style="left:1003.17px;top:18.03px;font-size:14.5px;letter-spacing:0.023px;color:#c0202e;-webkit-text-stroke:.25px #c0202e">0 items $0.00</div>
<div id="sph" class="abs" style="left:39.04px;top:110.95px;font-size:14px;letter-spacing:0.194px;color:#6a6a6a">Search Keyword</div>
<div id="sbtxt" class="abs" style="left:901.04px;top:110.69px;font-size:15.2px;letter-spacing:0.219px;font-weight:bold;color:#fff;-webkit-text-stroke:.35px #fff;transform:scaleX(.94);transform-origin:0 50%">SEARCH</div>
<div id="bc0" class="abs" style="left:8.23px;top:190.95px;font-size:14px;letter-spacing:0.258px;color:#6f6f6f">You are here:</div>
<div id="bc1" class="abs" style="left:102.91px;top:190.95px;font-size:14px;letter-spacing:0.641px;color:#f8a01c">Home</div>
<div id="bcs1" class="abs" style="left:148.52px;top:191.60px;font-size:13px;letter-spacing:0.000px;color:#777"><span style="display:inline-block;transform:scale(.88,1.34);transform-origin:50% 62%">&gt;</span></div>
<div id="bc2" class="abs" style="left:164.49px;top:190.95px;font-size:14px;letter-spacing:0.275px;color:#f8a01c">Catalog</div>
<div id="bcs2" class="abs" style="left:221.75px;top:191.60px;font-size:13px;letter-spacing:0.000px;color:#777"><span style="display:inline-block;transform:scale(.88,1.34);transform-origin:50% 62%">&gt;</span></div>
<div id="bc3" class="abs" style="left:235.59px;top:190.95px;font-size:14px;letter-spacing:0.160px;color:#f8a01c">Pharma &amp; Healthcare</div>
<div id="bcs3" class="abs" style="left:379.75px;top:191.60px;font-size:13px;letter-spacing:0.000px;color:#777"><span style="display:inline-block;transform:scale(.88,1.34);transform-origin:50% 62%">&gt;</span></div>
<div id="bc4" class="abs" style="left:394.18px;top:190.95px;font-size:14px;letter-spacing:0.256px;color:#f8a01c">Diagnostics</div>
<div id="bcs4" class="abs" style="left:475.33px;top:191.60px;font-size:13px;letter-spacing:0.000px;color:#777"><span style="display:inline-block;transform:scale(.88,1.34);transform-origin:50% 62%">&gt;</span></div>
<div id="bc5" class="abs" style="left:490.56px;top:190.95px;font-size:14px;letter-spacing:-0.150px;color:#f8a01c">Diseases</div>
<div id="title" class="abs" style="left:7.51px;top:251.30px;font-size:35px;letter-spacing:0.027px;color:#1abcae;-webkit-text-stroke:.3px #fff">Crohn's Disease (Regional Enteritis) - Pipeline Review, H2 2017</div>
<div id="offer" class="abs" style="left:23.51px;top:334.65px;font-size:14px;letter-spacing:0.052px;color:#6f6f6f">Common Year End Discount Offer 2016</div>
<div id="l1" class="abs" style="left:413.26px;top:395.05px;font-size:14px;letter-spacing:0.175px;font-weight:bold;color:#0f75bc">Publication ID:</div>
<div id="v1" class="abs" style="left:543.26px;top:395.05px;font-size:14px;letter-spacing:-0.282px;color:#6f6f6f">GMD0817084</div>
<div id="l2" class="abs" style="left:413.26px;top:419.95px;font-size:14px;letter-spacing:0.197px;font-weight:bold;color:#0f75bc">Publication Date:</div>
<div id="v2" class="abs" style="left:543.73px;top:419.95px;font-size:14px;letter-spacing:-0.250px;color:#6f6f6f">August 22, 2017</div>
<div id="l3" class="abs" style="left:413.26px;top:444.85px;font-size:14px;letter-spacing:-0.185px;font-weight:bold;color:#0f75bc">Pages:</div>
<div id="v3" class="abs" style="left:543.65px;top:444.85px;font-size:14px;letter-spacing:-0.271px;color:#6f6f6f">386</div>
<div id="l4" class="abs" style="left:413.26px;top:469.85px;font-size:14px;letter-spacing:0.060px;font-weight:bold;color:#0f75bc">Publisher:</div>
<div id="v4" class="abs" style="left:543.09px;top:469.85px;font-size:14px;letter-spacing:0.244px;color:#6f6f6f">Global Markets Direct</div>
<div id="l5" class="abs" style="left:413.66px;top:494.85px;font-size:14px;letter-spacing:-0.002px;font-weight:bold;color:#0f75bc">Countries:</div>
<div id="v5" class="abs" style="left:543.49px;top:494.85px;font-size:14px;letter-spacing:0.388px;color:#f8a01c">Global</div>
<div id="price" class="abs" style="left:689.55px;top:517.59px;font-size:18.2px;letter-spacing:0.379px;font-weight:bold;color:#be1e2d">$2,000.00</div>
<div id="plt" class="abs" style="left:412.96px;top:544.64px;font-size:14.6px;letter-spacing:-0.082px;color:#777">Publication License Type <b style="color:#e0262e">*</b></div>
<div id="o1t" class="abs" style="left:467.80px;top:596.17px;font-size:15.1px;letter-spacing:-0.154px;color:#303030;transform:scaleX(.87);transform-origin:0 50%">SINGLE USER LICENSE (PDF), $2,000.00</div>
<div id="o2t" class="abs" style="left:467.80px;top:663.17px;font-size:15.1px;letter-spacing:-0.075px;color:#303030;transform:scaleX(.87);transform-origin:0 50%">SITE LICENSE (PDF), $4,000.00</div>
<div id="o3t" class="abs" style="left:468.30px;top:730.17px;font-size:15.1px;letter-spacing:0.072px;color:#303030;transform:scaleX(.87);transform-origin:0 50%">GLOBAL LICENSE (PDF), $6,000.00</div>
<div id="h1" class="abs" style="left:413.13px;top:782.05px;font-size:14px;letter-spacing:0.186px;color:#777">Please choose the suitable license type from above.</div>
<div id="h2" class="abs" style="left:413.13px;top:807.31px;font-size:14px;letter-spacing:0.190px;color:#777">More details are at given under tab "Report License</div>
<div id="h3" class="abs" style="left:413.40px;top:831.85px;font-size:14px;letter-spacing:0.268px;color:#777">Types" below.</div>
<div id="atctxt" class="abs" style="left:530.82px;top:886.29px;font-size:17.2px;letter-spacing:0.618px;font-weight:bold;color:#fff;-webkit-text-stroke:.4px #fff">ADD TO CART</div>
<div id="whytxt" class="abs" style="left:872.54px;top:408.26px;font-size:24.4px;letter-spacing:-0.045px;color:#1b3f5e;-webkit-text-stroke:.25px #fff">Why to buy from us?</div>
<div id="p1t" class="abs" style="left:837.15px;top:480.01px;font-size:17px;letter-spacing:0.082px;color:#fff;-webkit-text-stroke:.35px #fff">Globally Trusted Brand</div>
<div id="t1" class="abs" style="left:818.63px;top:532.15px;font-size:14px;letter-spacing:0.263px;color:#777">We help executives from <span style="color:#f8a01c">Fortune 500</span> firms to</div>
<div id="t2" class="abs" style="left:817.58px;top:557.35px;font-size:14px;letter-spacing:0.293px;color:#777">Start-ups with their market research needs thus we</div>
<div id="t3" class="abs" style="left:818.05px;top:582.35px;font-size:14px;letter-spacing:0.315px;color:#777">can help you too.</div>
<div id="p2t" class="abs" style="left:834.05px;top:640.61px;font-size:17px;letter-spacing:0.206px;color:#fff;-webkit-text-stroke:.35px #fff">Shop With Confidence</div>
<div id="p3t" class="abs" style="left:833.59px;top:705.21px;font-size:17px;letter-spacing:0.009px;color:#fff;-webkit-text-stroke:.35px #fff">Secure Checkout</div>
<div id="p4t" class="abs" style="left:832.29px;top:769.24px;font-size:17px;letter-spacing:0.175px;color:#fff;-webkit-text-stroke:.35px #fff">Frequently Asked Questions</div>
<div id="ct1" class="abs" style="left:47.84px;top:514.07px;font-size:18.6px;letter-spacing:-0.171px;color:#333;-webkit-text-stroke:.3px #fff">Crohn's Disease (Regional Enteritis) -</div>
<div id="ct2" class="abs" style="left:47.27px;top:534.07px;font-size:18.6px;letter-spacing:-0.284px;color:#333;-webkit-text-stroke:.3px #fff">Pipeline Review, H2 2017</div>
<div id="url" class="abs" style="left:81.26px;top:817.37px;font-size:13.6px;letter-spacing:0.406px;color:#fff;font-family:'DejaVu Sans',sans-serif">www.marketresearchreports.com</div>
<div id="links1" class="abs" style="left:38.64px;top:863.95px;font-size:14px;letter-spacing:0.325px;color:#f8a01c">Printer version</div>
<div id="links2" class="abs" style="left:163.09px;top:863.95px;font-size:14px;letter-spacing:0.217px;color:#f8a01c">Send by email</div>
</body>
</html>
